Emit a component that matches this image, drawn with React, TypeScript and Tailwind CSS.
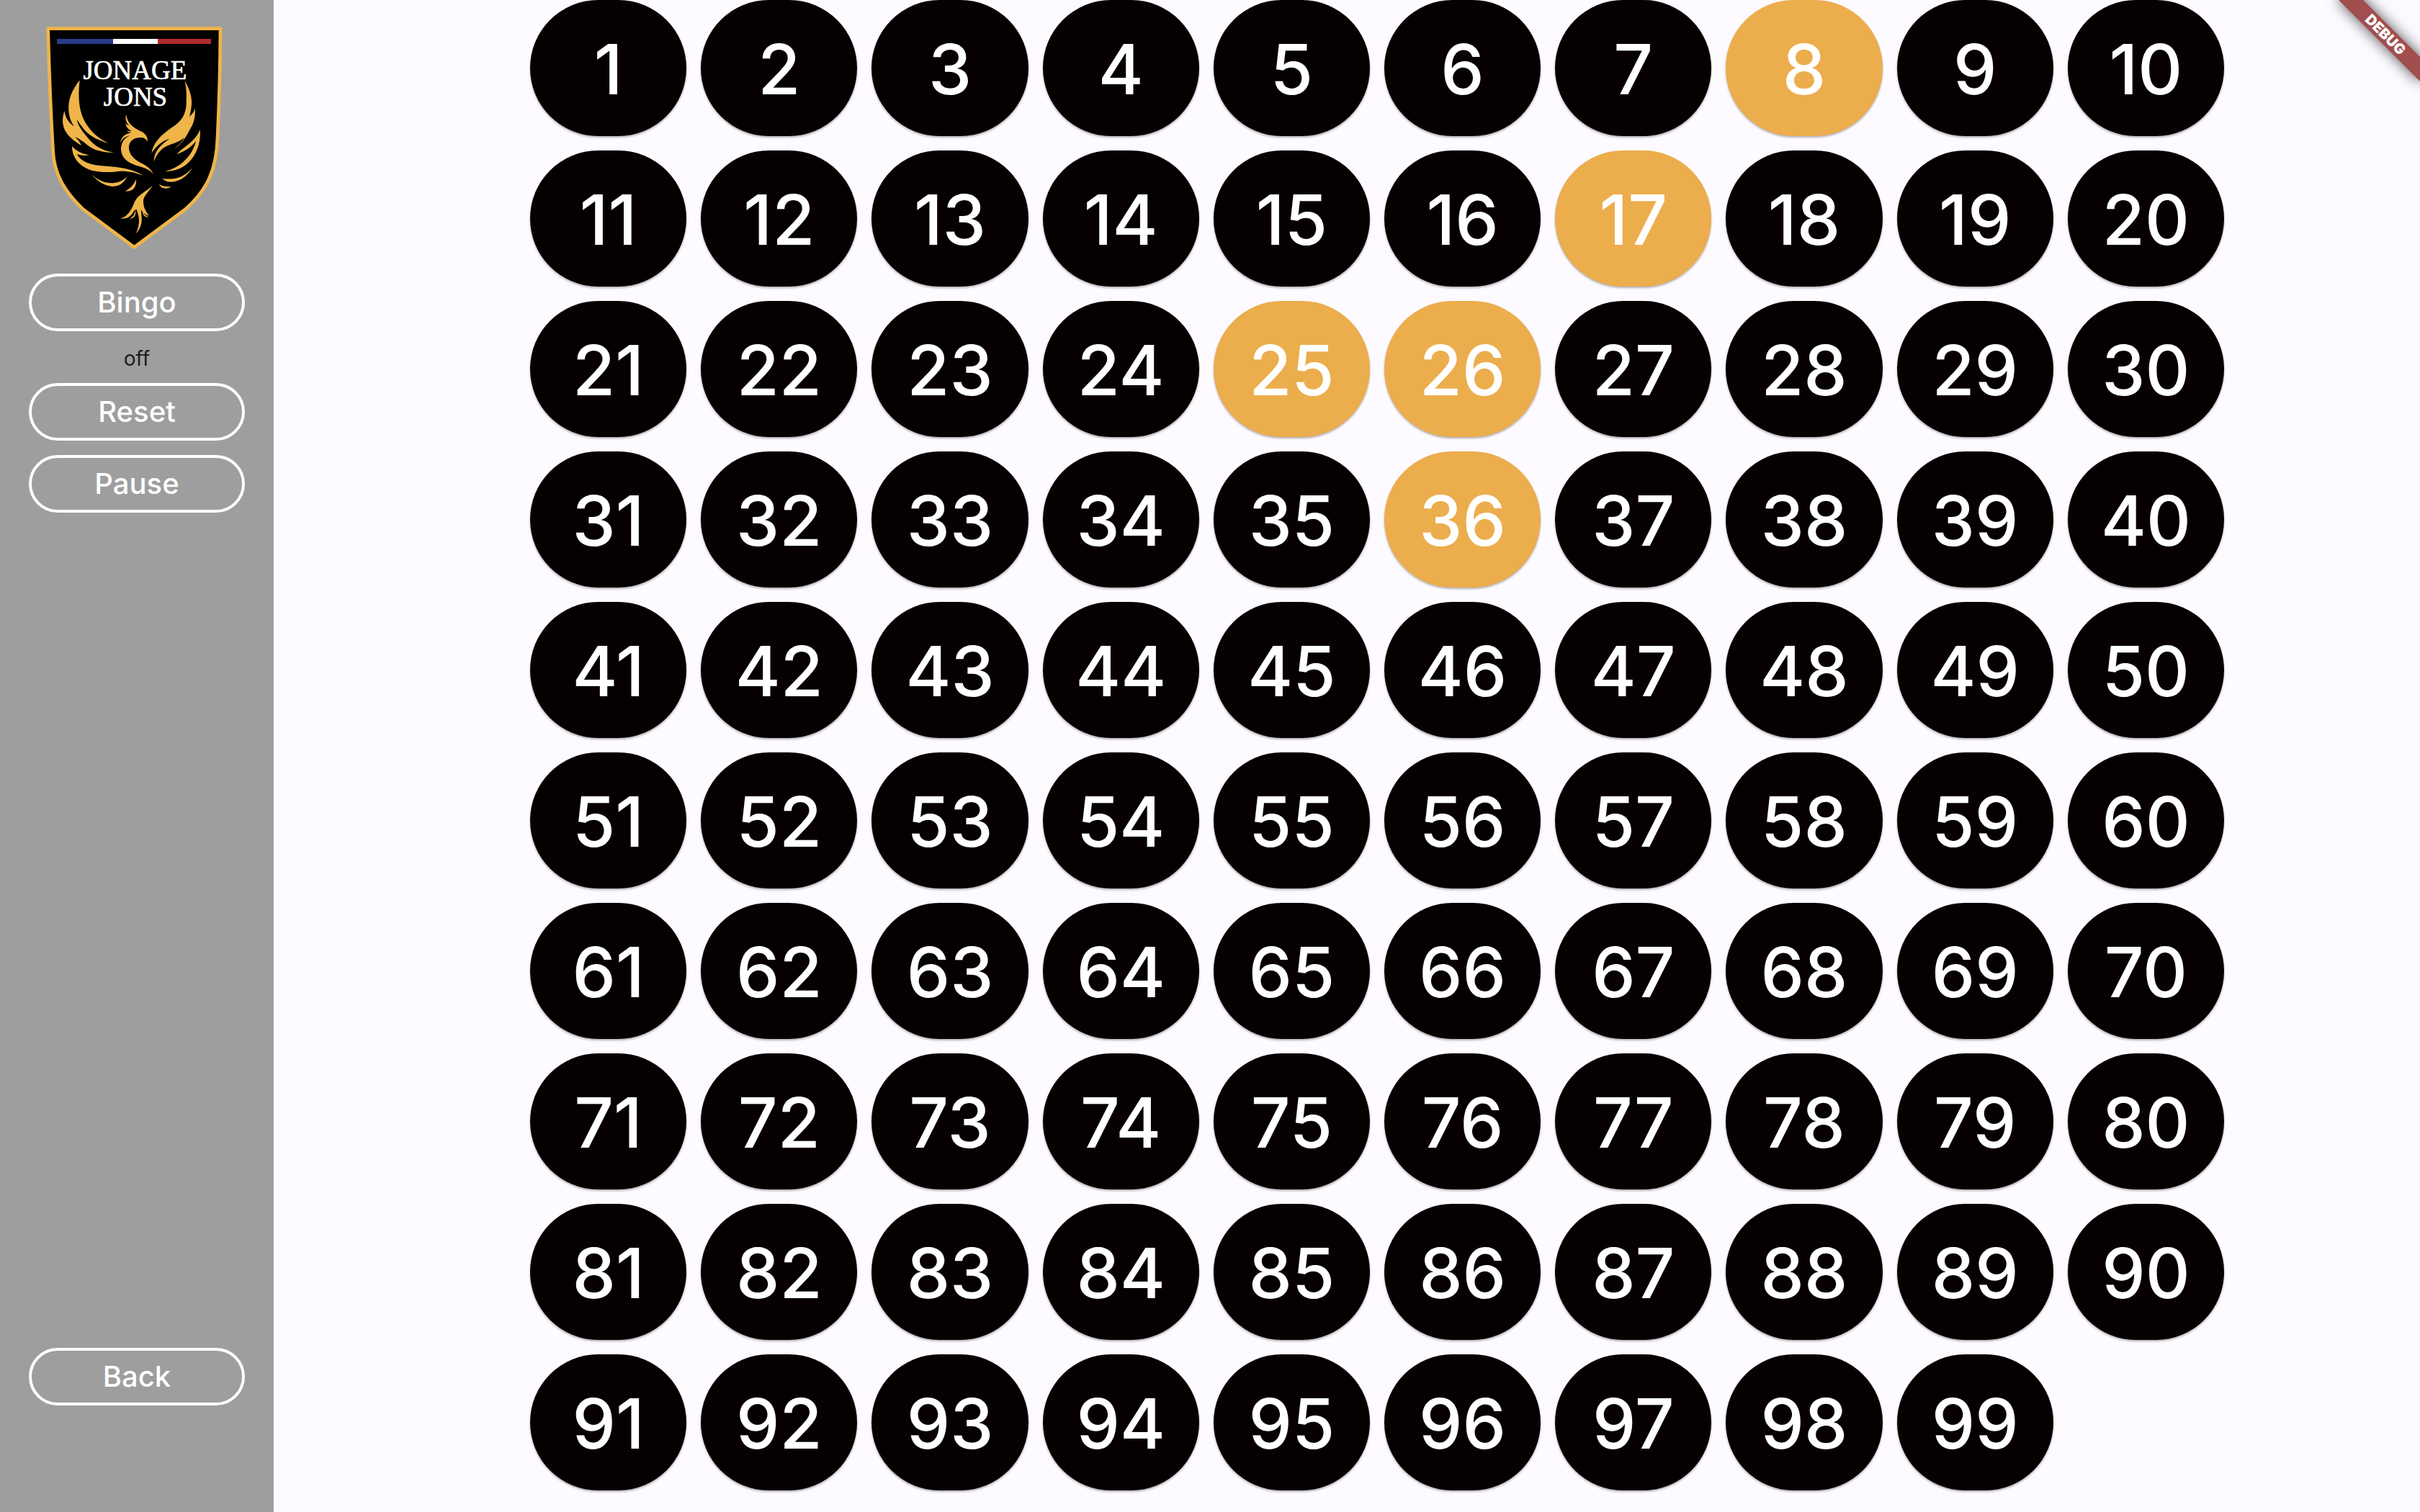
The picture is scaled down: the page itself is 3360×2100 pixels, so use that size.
import React, { useState } from "react";

const NUMBERS = Array.from({ length: 99 }, (_, i) => i + 1);
const INITIALLY_DRAWN = [8, 17, 25, 26, 36];

const PHOENIX = [
  // left wing
  "M212 304C180 345 163 385 166 430C168 460 178 482 189 497C165 480 151 460 149 432C137 462 138 498 158 525C172 545 195 562 219 576C213 562 203 550 191 540C235 558 245 585 285 596C315 604 335 606 355 605C300 600 262 568 238 535C217 508 204 490 200 467C220 498 238 522 262 537C285 552 310 561 332 566C300 552 270 530 245 495C210 445 203 385 212 304Z",
  "M180 578C190 592 210 608 252 616C232 620 215 617 200 611C215 640 250 655 295 660C345 664 385 667 420 677C445 683 462 692 476 703C445 688 415 682 380 683C350 688 300 690 262 680C215 665 180 630 180 578Z",
  "M260 695C290 725 325 735 355 732C380 730 395 720 410 706C395 735 375 746 350 747C315 745 285 725 260 695Z",
  "M447 718C435 742 425 752 402 767C428 769 450 755 447 718Z",
  // head and neck
  "M406 446C400 465 405 480 418 492C411 492 406 488 402 484C406 500 415 510 428 517C420 518 414 517 409 514C413 521 420 523 427 523C400 528 385 540 381 566C390 548 400 538 424 535C395 543 384 570 384 592C386 640 430 655 470 666C495 674 508 683 519 695C508 672 490 660 465 648C430 630 415 605 417 580C420 550 450 540 475 544C487 548 492 555 495 560C496 540 485 525 465 516C445 505 410 490 406 446Z",
  // right wing
  "M649 306C672 345 682 380 677 415C675 430 673 442 669 456C681 446 690 435 692 421C695 460 686 488 668 515C652 545 635 572 608 588C625 575 640 560 648 543C625 563 600 568 575 578C550 590 532 612 521 643C520 605 545 575 587 548C555 555 530 580 511 608C520 560 555 530 595 502C640 475 658 440 656 390C658 355 655 330 649 306Z",
  "M713 511C720 580 680 685 568 683C625 670 680 625 696 558C675 585 650 600 616 613C645 580 690 565 713 511Z",
  "M683 668C655 712 615 736 575 726C568 722 562 719 555 713C605 722 645 710 683 668Z",
  "M543 738C560 748 575 747 594 748C575 760 550 757 543 738Z",
  // tail
  "M514 743C500 762 455 778 440 812C428 845 412 872 381 881C415 882 428 868 438 848L449 842C452 855 460 870 459 892C458 915 452 932 445 944C465 925 472 900 470 875L467 843C475 858 490 868 501 868C485 850 476 830 477 803C482 780 505 765 514 743Z",
  "M443 845C441 865 433 875 418 881C436 882 450 868 443 845Z",
  "M472 852C475 868 486 877 501 875C488 870 479 862 472 852Z",
];

function Crest() {
  return (
    <svg viewBox="0 60 900 960" className="w-full" role="img" aria-label="Jonage Jons">
      <path
        d="M80 89H798C797 250 793 400 786 545C782 680 740 765 652 842L439 1000L226 842C145 765 105 690 101 600C92 450 86 330 80 89Z"
        fill="#000000"
        stroke="#efb548"
        strokeWidth="14"
        strokeLinejoin="round"
      />
      <rect x="117" y="132" width="234" height="21" fill="#283b87" />
      <rect x="351" y="132" width="186" height="21" fill="#ffffff" />
      <rect x="537" y="132" width="222" height="21" fill="#b12b2e" />
      <g
        fill="#ffffff"
        stroke="#ffffff"
        strokeWidth="2"
        fontSize="111"
        fontFamily="'Liberation Serif', serif"
        textAnchor="middle"
      >
        <text x="442" y="300">JONAGE</text>
        <text x="444" y="411">JONS</text>
      </g>
      <g fill="#efb548">
        {PHOENIX.map((d) => (
          <path key={d} d={d} />
        ))}
      </g>
    </svg>
  );
}

function SideButton({ label, onClick }: { label: string; onClick?: () => void }) {
  return (
    <button
      type="button"
      onClick={onClick}
      className="flex h-20 w-full shrink-0 items-center justify-center rounded-full border-4 border-white text-[40px] leading-none font-medium text-white"
    >
      {label}
    </button>
  );
}

function DebugBanner() {
  return (
    <div className="pointer-events-none absolute top-0 right-0 size-40 overflow-hidden">
      <div className="absolute top-9 left-8 flex h-6 w-40 rotate-45 items-center justify-center bg-[#a14e4e] text-[20px] leading-none font-black text-white shadow-[0_0_20px_rgba(0,0,0,0.7)]">
        DEBUG
      </div>
    </div>
  );
}

export default function App() {
  const [drawn, setDrawn] = useState<number[]>(INITIALLY_DRAWN);
  const [bingo, setBingo] = useState(false);

  const toggle = (n: number) =>
    setDrawn((list) => (list.includes(n) ? list.filter((x) => x !== n) : [...list, n]));

  return (
    <div className="relative flex h-screen overflow-hidden bg-[#fdfbff] font-['Inter',sans-serif]">
      <aside className="flex w-[380px] shrink-0 flex-col bg-[#9e9e9e] px-10 pt-[30px] pb-[148px]">
        <Crest />
        <div className="mt-[30px] flex flex-1 flex-col">
          <SideButton label="Bingo" onClick={() => setBingo(!bingo)} />
          <p className="flex h-[72px] items-center justify-center pt-1 text-[28px] leading-none text-[#1b1b1f]">
            {bingo ? "on" : "off"}
          </p>
          <div className="flex flex-col gap-5">
            <SideButton label="Reset" onClick={() => setDrawn([])} />
            <SideButton label="Pause" />
          </div>
          <div className="mt-auto">
            <SideButton label="Back" />
          </div>
        </div>
      </aside>

      <main className="min-w-0 flex-1 pr-[272px] pl-[356px]">
        <div className="grid grid-cols-10 gap-5">
          {NUMBERS.map((n) => (
            <button
              key={n}
              type="button"
              aria-pressed={drawn.includes(n)}
              onClick={() => toggle(n)}
              className={`flex aspect-[1149/1000] items-center justify-center rounded-full pt-0.5 text-[96px] leading-none font-medium text-white shadow-[0_2px_3px_rgba(0,0,0,0.3)] ${
                drawn.includes(n) ? "bg-[#ecad4d]" : "bg-[#060000]"
              }`}
            >
              {n}
            </button>
          ))}
        </div>
      </main>

      <DebugBanner />
    </div>
  );
}
